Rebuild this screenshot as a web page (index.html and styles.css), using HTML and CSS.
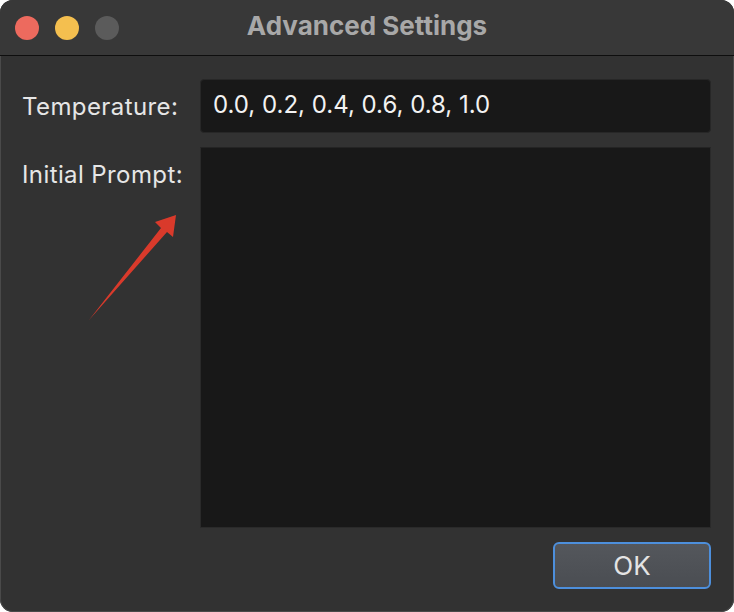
FILE: index.html
```html
<!DOCTYPE html>
<html>
<head>
<meta charset="utf-8">
<link rel="stylesheet" href="styles.css">
</head>
<body>
<div class="window">
  <div class="titlebar">
    <div class="lights">
      <span class="light red"></span>
      <span class="light yellow"></span>
      <span class="light gray"></span>
    </div>
    <div class="title">Advanced Settings</div>
  </div>
  <div class="content">
    <div class="row row-temp">
      <label class="label">Temperature:</label>
      <div class="field">0.0, 0.2, 0.4, 0.6, 0.8, 1.0</div>
    </div>
    <div class="row row-prompt">
      <label class="label label-top">Initial Prompt:</label>
      <div class="textarea"></div>
    </div>
    <div class="actions">
      <button class="ok">OK</button>
    </div>
    <svg class="arrow" width="100" height="120" viewBox="80 210 100 120">
      <polygon points="89,320 161,228 155,222 176,215 173,237 167,232" fill="#d93a2b"/>
    </svg>
  </div>
</div>
</body>
</html>
```

FILE: styles.css
```css
html, body {
  margin: 0;
  padding: 0;
  background: #ffffff;
}
body {
  width: 734px;
  height: 612px;
  overflow: hidden;
  font-family: "Inter", "Open Sans", "Liberation Sans", sans-serif;
}
.window {
  width: 734px;
  height: 612px;
  box-sizing: border-box;
  border-radius: 13px;
  overflow: hidden;
  background: #323232;
  display: flex;
  flex-direction: column;
  position: relative;
  box-shadow: inset 0 0 0 1px #4a4a4a;
}
.titlebar {
  height: 55px;
  background: #383838;
  border-bottom: 1px solid #0e0e0e;
  display: flex;
  align-items: center;
  position: relative;
  flex: none;
}
.lights {
  display: flex;
  gap: 16px;
  padding-left: 15px;
}
.light {
  width: 24px;
  height: 24px;
  border-radius: 50%;
  display: block;
}
.red { background: #ed6a5e; }
.yellow { background: #f4bf4f; }
.gray { background: #5b5b5b; }
.title {
  position: absolute;
  left: 0;
  right: 0;
  top: 0;
  height: 55px;
  line-height: 51px;
  text-align: center;
  color: #a8a8a8;
  font-weight: 700;
  font-size: 26px;
}
.content {
  flex: 1;
  display: flex;
  flex-direction: column;
  padding: 23px 23px 23px 22px;
  gap: 14px;
  position: relative;
}
.row {
  display: flex;
}
.row-temp {
  align-items: center;
}
.row-prompt {
  flex: 1;
}
.label {
  width: 178px;
  flex: none;
  color: #e6e6e6;
  font-size: 24px;
  letter-spacing: 0.4px;
}
.label-top {
  padding-top: 13px;
}
.field {
  flex: 1;
  height: 54px;
  box-sizing: border-box;
  background: #181818;
  border: 1px solid #272727;
  border-radius: 4px;
  color: #f2f2f2;
  font-size: 24px;
  line-height: 50px;
  padding-left: 12px;
}
.textarea {
  flex: 1;
  height: 381px;
  box-sizing: border-box;
  background: #181818;
  border: 1px solid #2a2a2a;
  border-top-color: #242424;
}
.actions {
  display: flex;
  justify-content: flex-end;
}
.ok {
  width: 158px;
  height: 47px;
  box-sizing: border-box;
  border: 2px solid #4d8fdc;
  border-radius: 6px;
  background: linear-gradient(#54575c, #4a4d52);
  color: #e4e4e4;
  font-family: "Inter", "Open Sans", "Liberation Sans", sans-serif;
  font-size: 26px;
  padding: 0;
}
.arrow {
  position: absolute;
  left: 80px;
  top: 154px;
}
```
